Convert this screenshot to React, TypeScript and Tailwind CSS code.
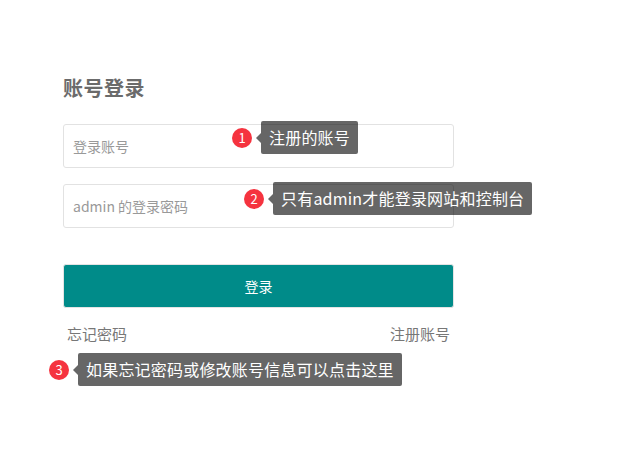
const font = "font-['Noto_Sans_CJK_SC','Noto_Sans',sans-serif]"

function Hint({ n, text, className }: { n: number; text: string; className: string }) {
    return (
        <div className={`absolute flex items-center ${className}`}>
            <span className="flex h-5 w-5 items-center justify-center rounded-full bg-[#f5333f] text-[13px] leading-none text-white">
                {n}
            </span>
            <span className="ml-[4px] h-0 w-0 border-y-[5px] border-r-[5px] border-y-transparent border-r-black/60" />
            <span className="rounded-[2px] bg-black/60 px-[8px] text-[16px] leading-[33px] tracking-[0.2px] whitespace-nowrap text-white">
                {text}
            </span>
        </div>
    )
}

export default function App() {
    return (
        <div className={`relative h-[450px] w-[627px] bg-white ${font}`}>

            <div className="ml-[63px] w-[391px] pt-[74px]">

                <h1 className="text-[20px] font-bold leading-[28px] tracking-[0.5px] text-[#6b6b6b]">账号登录</h1>

                <div className="mt-[22px] flex flex-col gap-4">
                    <input
                        placeholder="登录账号"
                        className="h-[44px] w-full rounded-[3px] border border-[#e2e2e2] px-[9px] text-[14px] text-[#333] outline-none placeholder:text-[#999]"
                    />
                    <input
                        placeholder="admin 的登录密码"
                        className="h-[44px] w-full rounded-[3px] border border-[#e2e2e2] px-[9px] text-[14px] text-[#333] outline-none placeholder:text-[#999]"
                    />
                </div>

                <button className="mt-[36px] h-[44px] w-full rounded-[3px] border border-[#e4e4e4] bg-[#008b89] text-[14px] text-white">
                    登录
                </button>

                <div className="mt-[15px] flex justify-between px-[4px] text-[15px] leading-[22px] text-[#777]">
                    <a>忘记密码</a>
                    <a>注册账号</a>
                </div>

            </div>

            {/* Guide hints */}
            <Hint n={1} text="注册的账号" className="left-[232px] top-[121px]" />
            <Hint n={2} text="只有admin才能登录网站和控制台" className="left-[244px] top-[182px]" />
            <Hint n={3} text="如果忘记密码或修改账号信息可以点击这里" className="left-[49px] top-[353px]" />

        </div>
    )
}
